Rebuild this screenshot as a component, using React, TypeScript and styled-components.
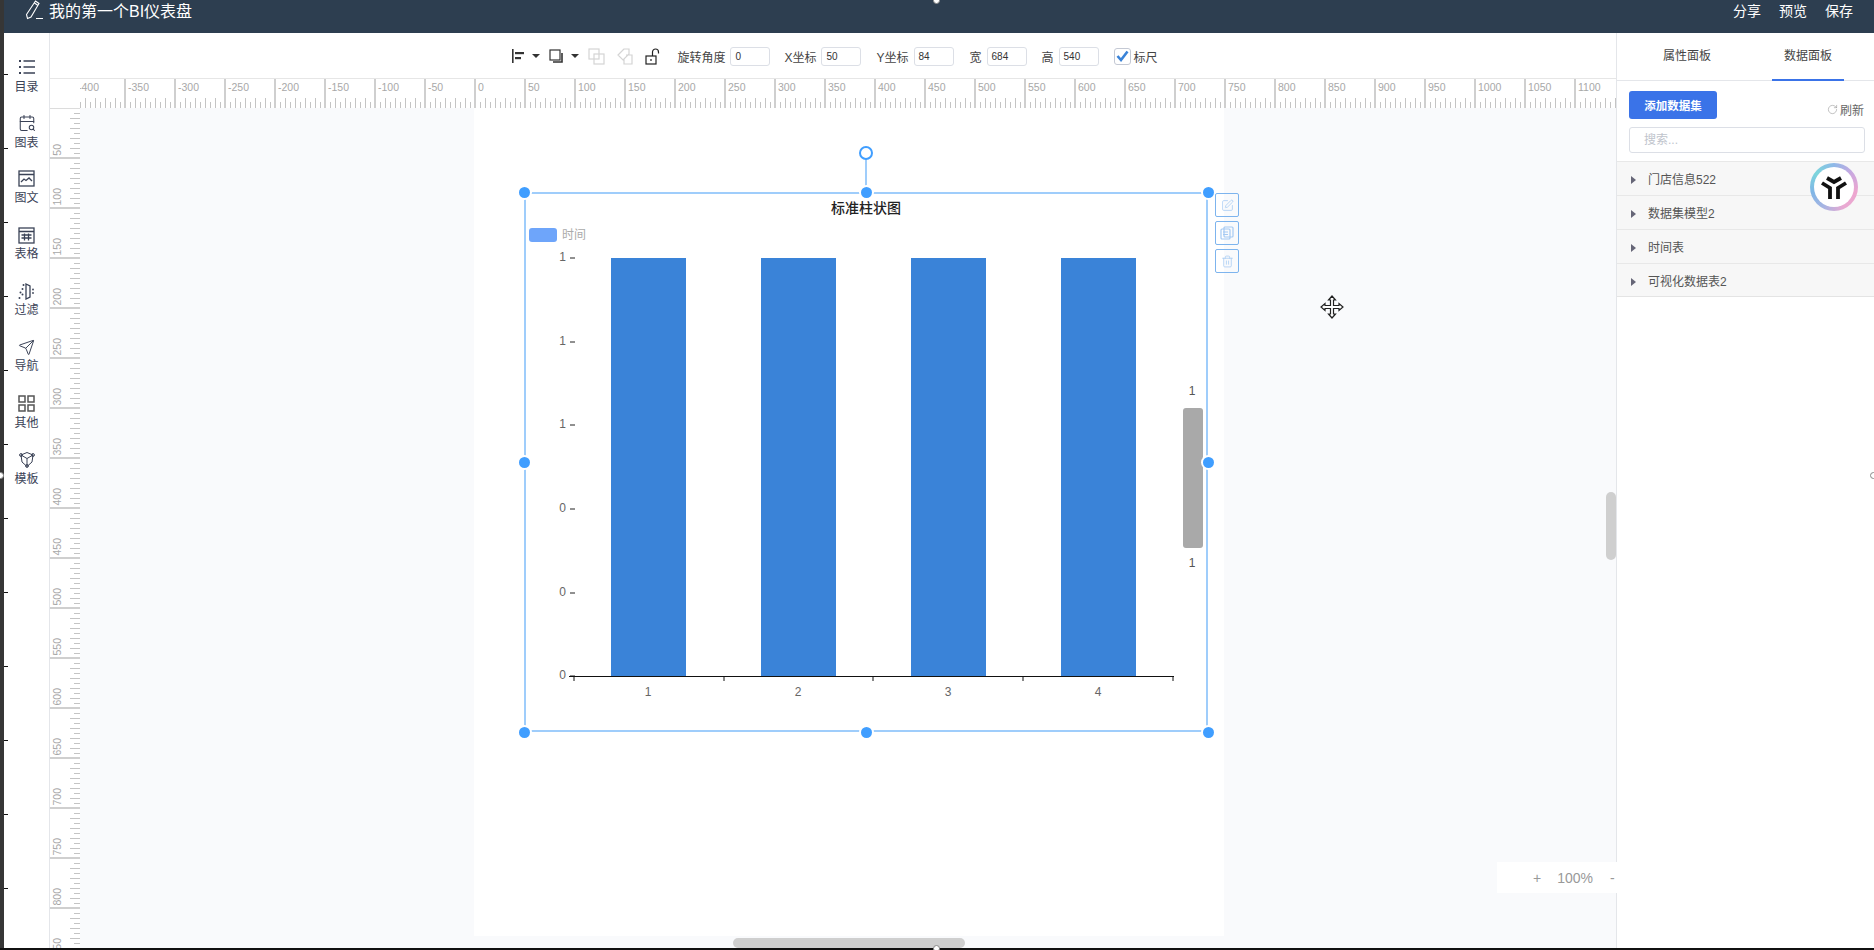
import React from 'react';
import styled, { createGlobalStyle } from 'styled-components';
import { CalendarSearch, RotateCw, Send, SquarePen, Trash2 } from 'lucide-react';

const FONT = '"Liberation Sans", "Noto Sans CJK SC", sans-serif';

const GlobalStyle = createGlobalStyle`
  html, body {
    margin: 0;
    padding: 0;
    overflow: hidden;
    background: #fff;
  }
  * { box-sizing: border-box; }
`;

const AppShell = styled.div`
  position: relative;
  width: 1874px;
  height: 950px;
  display: flex;
  overflow: hidden;
  font-family: ${FONT};
  font-size: 12px;
  color: #444;
`;

const EdgeStrip = styled.div`
  position: relative;
  width: 4px;
  flex: none;
  background: #363636;
`;

const EdgeTick = styled.span<{ $y: number }>`
  position: absolute;
  left: 4px;
  top: ${({ $y }) => $y}px;
  width: 4px;
  height: 1px;
  background: #111;
  z-index: 5;
`;

const BottomLine = styled.div`
  position: absolute;
  left: 0;
  right: 0;
  bottom: 0;
  height: 2px;
  background: #111;
  z-index: 6;
`;

const EdgeDot = styled.span<{ $x: number; $y: number; $fill: string }>`
  position: absolute;
  left: ${({ $x }) => $x}px;
  top: ${({ $y }) => $y}px;
  width: 7px;
  height: 7px;
  border-radius: 50%;
  background: ${({ $fill }) => $fill};
  border: 1px solid #888;
  z-index: 7;
`;

const MainColumn = styled.div`
  flex: 1;
  min-width: 0;
  display: flex;
  flex-direction: column;
`;

const Header = styled.header`
  height: 33px;
  flex: none;
  background: #2d3e50;
  color: #fff;
  display: flex;
  justify-content: space-between;
  padding: 0 21px 13px 21px;
  align-items: center;
`;

const HeaderTitle = styled.div`
  display: flex;
  align-items: center;
  gap: 5px;
  font-size: 16px;
`;

const HeaderActions = styled.div`
  display: flex;
  gap: 18px;
  font-size: 14px;
`;

const Workspace = styled.div`
  flex: 1;
  min-height: 0;
  display: flex;
`;

const Sidebar = styled.nav`
  width: 46px;
  flex: none;
  background: #fff;
  border-right: 1px solid #e4e6ea;
  padding-top: 25px;
  display: flex;
  flex-direction: column;
`;

const SideItem = styled.div`
  height: 56.2px;
  display: flex;
  flex-direction: column;
  align-items: center;
  gap: 2.5px;
  color: #3a4256;
  line-height: 17px;
  svg { display: block; }
`;

const Editor = styled.div`
  flex: 1;
  min-width: 0;
  display: flex;
  flex-direction: column;
`;

const Toolbar = styled.div`
  height: 45px;
  flex: none;
  padding: 1px 0 0 3px;
  display: flex;
  align-items: center;
  justify-content: center;
  background: #fff;
  color: #444;
`;

const ToolIcon = styled.span<{ $gap?: number }>`
  display: flex;
  align-items: center;
  margin-right: ${({ $gap }) => $gap ?? 0}px;
`;

const Caret = styled.span`
  width: 0;
  height: 0;
  margin: 0 9px 0 7px;
  border-left: 4px solid transparent;
  border-right: 4px solid transparent;
  border-top: 4px solid #333;
`;

const FieldLabel = styled.span<{ $gap?: number }>`
  margin-left: ${({ $gap }) => $gap ?? 0}px;
  white-space: nowrap;
`;

const FieldInput = styled.div`
  width: 40px;
  height: 19px;
  margin-left: 5px;
  padding-left: 4px;
  border: 1px solid #dcdfe6;
  border-radius: 3px;
  font-size: 10px;
  line-height: 17px;
  color: #333;
`;

const Check = styled.span`
  width: 17px;
  height: 17px;
  margin: 0 3px 0 15px;
  border: 1px solid #c4c9d4;
  border-radius: 3px;
  display: flex;
  align-items: center;
  justify-content: center;
`;

const TopRuler = styled.div`
  height: 30px;
  flex: none;
  padding-left: 30px;
  background: #fff;
  border-top: 1px solid #e6e6e6;
`;

const TopRulerClip = styled.div`
  height: 100%;
  overflow: hidden;
`;

const TopRulerTrack = styled.div`
  display: flex;
  margin-left: -6px;
`;

const TopRulerCell = styled.div`
  width: 50px;
  height: 29px;
  flex: none;
  padding: 1px 0 0 2px;
  border-left: 2px solid #cfcfcf;
  font-size: 10.5px;
  line-height: 14px;
  color: #a8a8a8;
  background-image:
    repeating-linear-gradient(to right, transparent 0 4px, #c4c4c4 4px 5px, transparent 5px 10px),
    repeating-linear-gradient(to right, transparent 0 9px, #c4c4c4 9px 10px);
  background-size: 100% 6px, 100% 10px;
  background-position: 0 100%, 0 100%;
  background-repeat: no-repeat;
`;

const CanvasRow = styled.div`
  flex: 1;
  min-height: 0;
  display: flex;
`;

const LeftRuler = styled.div`
  width: 30px;
  flex: none;
  background: #fff;
  border-top: 1px solid #dcdcdc;
  overflow: hidden;
`;

const LeftRulerCell = styled.div`
  width: 30px;
  height: 50px;
  padding: 0 0 1px 0;
  border-bottom: 2px solid #cfcfcf;
  font-size: 10.5px;
  color: #a8a8a8;
  background-image:
    repeating-linear-gradient(to bottom, transparent 0 4px, #c4c4c4 4px 5px, transparent 5px 10px),
    repeating-linear-gradient(to bottom, transparent 0 9px, #c4c4c4 9px 10px);
  background-size: 6px 100%, 10px 100%;
  background-position: 100% 0, 100% 0;
  background-repeat: no-repeat;
  display: flex;
  align-items: flex-end;
`;

const VerticalText = styled.span`
  writing-mode: vertical-rl;
  transform: rotate(180deg);
  line-height: 14px;
`;

const Canvas = styled.main`
  position: relative;
  flex: 1;
  min-width: 0;
  background: #f9fafc;
  padding-left: 394px;
`;

const Page = styled.div`
  position: relative;
  width: 750px;
  height: 828px;
  background: #fff;
`;

const Selection = styled.div`
  position: absolute;
  left: 50px;
  top: 84px;
  width: 684px;
  height: 540px;
  box-shadow: inset 0 0 0 2px #9fcdfb;
`;

const ChartSvg = styled.svg`
  position: absolute;
  left: 0;
  top: 0;
  font-family: ${FONT};
`;

const Handle = styled.span<{ $x: number; $y: number }>`
  position: absolute;
  left: ${({ $x }) => $x}%;
  top: ${({ $y }) => $y}%;
  width: 11px;
  height: 11px;
  margin: -5px 0 0 -5px;
  border-radius: 50%;
  background: #409eff;
  box-shadow: 0 0 0 2px #fff;
`;

const RotateStem = styled.span`
  position: absolute;
  left: 50%;
  top: -33px;
  width: 2px;
  height: 33px;
  margin-left: -1px;
  background: #9fcdfb;
`;

const RotateKnob = styled.span`
  position: absolute;
  left: 50%;
  top: -46px;
  width: 14px;
  height: 14px;
  margin-left: -7px;
  border: 2px solid #409eff;
  border-radius: 50%;
  background: #fff;
`;

const SideButtons = styled.div`
  position: absolute;
  left: 691px;
  top: 1px;
  display: flex;
  flex-direction: column;
  gap: 4px;
`;

const SideButton = styled.span`
  width: 24px;
  height: 24px;
  border: 1px solid #7db4ee;
  border-radius: 2px;
  display: flex;
  align-items: center;
  justify-content: center;
  color: #a5caf3;
`;

const MoveCursor = styled.svg`
  position: absolute;
  left: 1240px;
  top: 187px;
`;

const VScroll = styled.div`
  position: absolute;
  right: 0;
  top: 384px;
  width: 10px;
  height: 68px;
  border-radius: 5px;
  background: #cfcfcf;
`;

const HScroll = styled.div`
  position: absolute;
  left: 653px;
  bottom: 2px;
  width: 232px;
  height: 10px;
  border-radius: 5px;
  background: #cfcfcf;
`;

const ZoomBar = styled.div`
  position: absolute;
  left: 1497px;
  top: 862px;
  width: 148px;
  height: 31px;
  padding-left: 36px;
  display: flex;
  align-items: center;
  background: #fff;
  color: #999;
  font-size: 14px;
  z-index: 4;
`;

const ZoomText = styled.span<{ $gap: number }>`
  margin-right: ${({ $gap }) => $gap}px;
`;

const RightPanel = styled.aside`
  width: 258px;
  flex: none;
  background: #fff;
  border-left: 1px solid #e4e6ea;
  display: flex;
  flex-direction: column;
`;

const Tabs = styled.div`
  height: 48px;
  flex: none;
  display: grid;
  grid-template-columns: 140px 102px;
  border-bottom: 1px solid #e4e6ea;
`;

const Tab = styled.div<{ $active?: boolean }>`
  display: flex;
  justify-content: center;
  align-items: center;
  position: relative;
  padding-bottom: 5px;
  color: #444;
  &::after {
    content: '';
    display: ${({ $active }) => ($active ? 'block' : 'none')};
    position: absolute;
    left: 15px;
    bottom: -1px;
    width: 72px;
    height: 2px;
    background: #3a73e8;
  }
`;

const DataPane = styled.div`
  padding: 10px 9px 0 12px;
`;

const ActionRow = styled.div`
  display: flex;
  justify-content: space-between;
  align-items: flex-end;
`;

const AddButton = styled.div`
  width: 88px;
  height: 28px;
  border-radius: 3px;
  background: #3a73e8;
  color: #fff;
  font-weight: 700;
  display: flex;
  align-items: center;
  justify-content: center;
  font-size: 11.5px;
`;

const Refresh = styled.div`
  display: flex;
  align-items: center;
  gap: 2px;
  color: #666;
  padding-bottom: 1px;
  margin-right: 1px;
`;

const SearchBox = styled.div`
  height: 26px;
  margin-top: 8px;
  padding-left: 14px;
  border: 1px solid #dcdfe6;
  border-radius: 3px;
  line-height: 24px;
  color: #c0c4cc;
`;

const DatasetList = styled.div`
  margin-top: 8px;
`;

const DatasetRow = styled.div`
  height: 34px;
  display: flex;
  align-items: center;
  padding-left: 14px;
  gap: 12px;
  background: #f7f7f7;
  border-top: 1px solid #e8e8e8;
  color: #555;
  &:last-child { border-bottom: 1px solid #e4e4e4; }
`;

const RowArrow = styled.span`
  width: 0;
  height: 0;
  margin-top: 3px;
  border-top: 4px solid transparent;
  border-bottom: 4px solid transparent;
  border-left: 5px solid #667;
`;

const FloatBadge = styled.div`
  position: absolute;
  left: 1810px;
  top: 163px;
  width: 48px;
  height: 48px;
  padding: 4px;
  border-radius: 50%;
  background: conic-gradient(#8fb8e8, #c9a8e0, #eda6cf, #e9a9d2, #a9b4e2, #7fb6e6, #7cd6dc, #8fb8e8);
  z-index: 4;
`;

const FloatBadgeInner = styled.div`
  width: 100%;
  height: 100%;
  border-radius: 50%;
  background: #fff;
  display: flex;
  align-items: center;
  justify-content: center;
`;

const sideStroke = { stroke: 'currentColor', fill: 'none', strokeWidth: 1.3 };

const ListIcon = () => (
  <svg width="18" height="18" viewBox="0 0 18 18" {...sideStroke}>
    <path d="M5.5 3H17M5.5 9H17M5.5 15H17" />
    <path d="M1 3h2M1 9h2M1 15h2" strokeWidth="1.8" />
  </svg>
);

const ChartTextIcon = () => (
  <svg width="17" height="17" viewBox="0 0 17 17" {...sideStroke}>
    <rect x="1" y="1" width="15" height="15" />
    <path d="M1 4.5h15M3 12l3-3 2 1.5L11 8l3 3" />
  </svg>
);

const TableIcon = () => (
  <svg width="17" height="17" viewBox="0 0 17 17" {...sideStroke}>
    <rect x="1" y="1" width="15" height="15" />
    <path d="M1 4.5h15M3.5 8h10M3.5 11h10M6.5 6.5v7M10.5 6.5v7" />
  </svg>
);

const FilterIcon = () => (
  <svg width="17" height="17" viewBox="0 0 17 17" fill="currentColor">
    <path d="M8 1l4 2v11l-4 2z" fill="none" stroke="currentColor" strokeWidth="1.3" />
    <circle cx="5.5" cy="2" r="1" /><circle cx="4.5" cy="6" r="1" /><circle cx="2.5" cy="9.5" r="1" />
    <circle cx="4.5" cy="11.5" r="1" /><circle cx="1.5" cy="15" r="1" /><circle cx="15" cy="6.5" r=".9" /><circle cx="15" cy="10" r=".9" />
  </svg>
);

const GridIcon = () => (
  <svg width="17" height="17" viewBox="0 0 17 17" fill="none" stroke="#555" strokeWidth="1.5">
    <rect x="1" y="1" width="6" height="6" /><rect x="10" y="1" width="6" height="6" />
    <rect x="1" y="10" width="6" height="6" /><rect x="10" y="10" width="6" height="6" />
  </svg>
);

const CubeIcon = () => (
  <svg width="18" height="17" viewBox="0 0 18 17" {...sideStroke} strokeWidth={1}>
    <path d="M3 4l6-2.5L15 4l-1 7-5 4.5L4 11zM3 4l6 3.5L15 4M9 7.5v8" />
    <circle cx="3" cy="4" r="1.4" /><circle cx="15" cy="4" r="1.4" /><circle cx="9" cy="15" r="1.4" />
  </svg>
);

const sideItems: { label: string; icon: React.ReactNode }[] = [
  { label: '目录', icon: <ListIcon /> },
  { label: '图表', icon: <CalendarSearch size={18} strokeWidth={1.4} /> },
  { label: '图文', icon: <ChartTextIcon /> },
  { label: '表格', icon: <TableIcon /> },
  { label: '过滤', icon: <FilterIcon /> },
  { label: '导航', icon: <Send size={17} strokeWidth={1.4} /> },
  { label: '其他', icon: <GridIcon /> },
  { label: '模板', icon: <CubeIcon /> },
];

const handles = [
  [0, 0], [50, 0], [100, 0],
  [0, 50], [100, 50],
  [0, 100], [50, 100], [100, 100],
];

const datasets = ['门店信息522', '数据集模型2', '时间表', '可视化数据表2'];
const topMarks = Array.from({ length: 31 }, (_, i) => -400 + i * 50);
const leftMarks = Array.from({ length: 17 }, (_, i) => 50 + i * 50);
const edgeTicks = Array.from({ length: 12 }, (_, i) => 74 + i * 74);

const yAxis = [
  { y: 258, label: '1' },
  { y: 342, label: '1' },
  { y: 425, label: '1' },
  { y: 509, label: '0' },
  { y: 593, label: '0' },
  { y: 676, label: '0' },
];
const bars = [
  { x: 611, label: '1' },
  { x: 761, label: '2' },
  { x: 911, label: '3' },
  { x: 1061, label: '4' },
];

const BarChart = () => (
  <ChartSvg width="684" height="540" viewBox="524 192 684 540">
    <text x="866" y="213" textAnchor="middle" fontSize="14" fontWeight="500" fill="#222">标准柱状图</text>
    <rect x="529" y="228" width="28" height="14" rx="3" fill="#6ea5fa" />
    <text x="562" y="239" fontSize="12" fill="#aaa">时间</text>
    {yAxis.map(t => (
      <g key={t.y}>
        <text x="566" y={t.y + 3} textAnchor="end" fontSize="12" fill="#666">{t.label}</text>
        <line x1="570" x2="575" y1={t.y} y2={t.y} stroke="#222" />
      </g>
    ))}
    {bars.map(b => (
      <g key={b.x}>
        <rect x={b.x} y="258" width="75" height="418" fill="#3a83d8" />
        <text x={b.x + 37} y="696" textAnchor="middle" fontSize="12" fill="#666">{b.label}</text>
      </g>
    ))}
    <line x1="569" x2="1174" y1="676.5" y2="676.5" stroke="#111" />
    {[574, 724, 873, 1023, 1173].map(x => (
      <line key={x} x1={x} x2={x} y1="676" y2="681" stroke="#111" />
    ))}
    <rect x="1183" y="408" width="20" height="140" rx="3" fill="#a9a9a9" />
    <text x="1192" y="395" textAnchor="middle" fontSize="12" fill="#555">1</text>
    <text x="1192" y="567" textAnchor="middle" fontSize="12" fill="#555">1</text>
  </ChartSvg>
);

export default function App() {
  return (
    <AppShell>
      <GlobalStyle />
      <EdgeStrip>
        {edgeTicks.map(y => <EdgeTick key={y} $y={y} />)}
      </EdgeStrip>
      <MainColumn>
        <Header>
          <HeaderTitle>
            <svg width="19" height="20" viewBox="0 0 19 20" fill="none" stroke="#fff" strokeWidth="1.1">
              <path d="M1.5 14.5l1 4 3.5-1.5L14 3.5 10.5 1zM9.5 3l3.5 2.5M11 18.5h7" />
            </svg>
            我的第一个BI仪表盘
          </HeaderTitle>
          <HeaderActions>
            <span>分享</span>
            <span>预览</span>
            <span>保存</span>
          </HeaderActions>
        </Header>
        <Workspace>
          <Sidebar>
            {sideItems.map(item => (
              <SideItem key={item.label}>
                {item.icon}
                <span>{item.label}</span>
              </SideItem>
            ))}
          </Sidebar>
          <Editor>
            <Toolbar>
              <ToolIcon>
                <svg width="14" height="14" viewBox="0 0 14 14" fill="#333">
                  <rect x="1" y="0" width="1.6" height="14" /><rect x="4" y="3" width="9" height="2.2" /><rect x="4" y="8" width="6" height="2.2" />
                </svg>
              </ToolIcon>
              <Caret />
              <ToolIcon>
                <svg width="15" height="15" viewBox="0 0 15 15" fill="none" stroke="#333" strokeWidth="1.2">
                  <rect x="1" y="1" width="10" height="10" /><path d="M13 4v9H4" strokeWidth="1.6" />
                </svg>
              </ToolIcon>
              <Caret />
              <ToolIcon $gap={12}>
                <svg width="17" height="17" viewBox="0 0 17 17" fill="none" stroke="#d4d4d4" strokeWidth="1.2">
                  <rect x="1" y="1" width="10" height="10" /><rect x="6" y="6" width="10" height="10" />
                </svg>
              </ToolIcon>
              <ToolIcon $gap={12}>
                <svg width="16" height="17" viewBox="0 0 16 17" fill="none" stroke="#d4d4d4" strokeWidth="1.2">
                  <path d="M7 1L1 7l5 5 6-6V1zM9 7h6v9H7v-5" />
                </svg>
              </ToolIcon>
              <ToolIcon $gap={16}>
                <svg width="16" height="17" viewBox="0 0 16 17" fill="none" stroke="#222" strokeWidth="1.2">
                  <rect x="1" y="8" width="10" height="8" />
                  <path d="M7.5 8V4a3 3 0 0 1 6 0v1.5M6 11v2" />
                </svg>
              </ToolIcon>
              <FieldLabel>旋转角度</FieldLabel>
              <FieldInput>0</FieldInput>
              <FieldLabel $gap={14}>X坐标</FieldLabel>
              <FieldInput>50</FieldInput>
              <FieldLabel $gap={15}>Y坐标</FieldLabel>
              <FieldInput>84</FieldInput>
              <FieldLabel $gap={16}>宽</FieldLabel>
              <FieldInput>684</FieldInput>
              <FieldLabel $gap={15}>高</FieldLabel>
              <FieldInput>540</FieldInput>
              <Check>
                <svg width="13" height="12" viewBox="0 0 13 12" fill="none" stroke="#3a83d8" strokeWidth="2.6">
                  <path d="M1.5 6l3.5 4 6.5-8.5" />
                </svg>
              </Check>
              <FieldLabel>标尺</FieldLabel>
            </Toolbar>
            <TopRuler>
              <TopRulerClip>
                <TopRulerTrack>
                  {topMarks.map(m => <TopRulerCell key={m}>{m}</TopRulerCell>)}
                </TopRulerTrack>
              </TopRulerClip>
            </TopRuler>
            <CanvasRow>
              <LeftRuler>
                {leftMarks.map(m => (
                  <LeftRulerCell key={m}>
                    <VerticalText>{m}</VerticalText>
                  </LeftRulerCell>
                ))}
              </LeftRuler>
              <Canvas>
                <Page>
                  <Selection>
                    <BarChart />
                    <RotateStem />
                    <RotateKnob />
                    {handles.map(([x, y]) => <Handle key={`${x}-${y}`} $x={x} $y={y} />)}
                    <SideButtons>
                      <SideButton><SquarePen size={13} strokeWidth={1.4} /></SideButton>
                      <SideButton>
                        <svg width="14" height="14" viewBox="0 0 14 14" fill="none" stroke="currentColor" strokeWidth="1.2">
                          <rect x="4" y="1" width="9" height="10" rx="1" /><rect x="1" y="3" width="9" height="10" rx="1" /><path d="M3 6h5M3 8.5h5" />
                        </svg>
                      </SideButton>
                      <SideButton><Trash2 size={13} strokeWidth={1.4} /></SideButton>
                    </SideButtons>
                  </Selection>
                </Page>
                <MoveCursor width="24" height="24" viewBox="0 0 24 24" fill="#fff" stroke="#222" strokeWidth="1.2">
                  <path d="M12 1l3.5 4H13.5v5.5H19V8.5l4 3.5-4 3.5v-2h-5.5V19h2L12 23l-3.5-4h2v-5.5H5v2L1 12l4-3.5v2h5.5V5h-2z" />
                </MoveCursor>
                <VScroll />
                <HScroll />
              </Canvas>
            </CanvasRow>
          </Editor>
          <RightPanel>
            <Tabs>
              <Tab>属性面板</Tab>
              <Tab $active>数据面板</Tab>
            </Tabs>
            <DataPane>
              <ActionRow>
                <AddButton>添加数据集</AddButton>
                <Refresh>
                  <RotateCw size={11} strokeWidth={1.3} color="#999" />
                  刷新
                </Refresh>
              </ActionRow>
              <SearchBox>搜索...</SearchBox>
            </DataPane>
            <DatasetList>
              {datasets.map(name => (
                <DatasetRow key={name}>
                  <RowArrow />
                  {name}
                </DatasetRow>
              ))}
            </DatasetList>
          </RightPanel>
        </Workspace>
      </MainColumn>
      <ZoomBar>
        <ZoomText $gap={16}>+</ZoomText>
        <ZoomText $gap={17}>100%</ZoomText>
        <ZoomText $gap={0}>-</ZoomText>
      </ZoomBar>
      <FloatBadge>
        <FloatBadgeInner>
          <svg width="30" height="30" viewBox="0 0 30 30" fill="none" stroke="#111" strokeWidth="3.8">
            <path d="M8 6l7 4 7-4M3 11l8 5v11M27 11l-8 5v11" />
          </svg>
        </FloatBadgeInner>
      </FloatBadge>
      <EdgeDot $x={-3} $y={472} $fill="#fff" />
      <EdgeDot $x={933} $y={-3} $fill="#fff" />
      <EdgeDot $x={933} $y={945} $fill="#fff" />
      <EdgeDot $x={1870} $y={472} $fill="#fff" />
      <BottomLine />
    </AppShell>
  );
}
